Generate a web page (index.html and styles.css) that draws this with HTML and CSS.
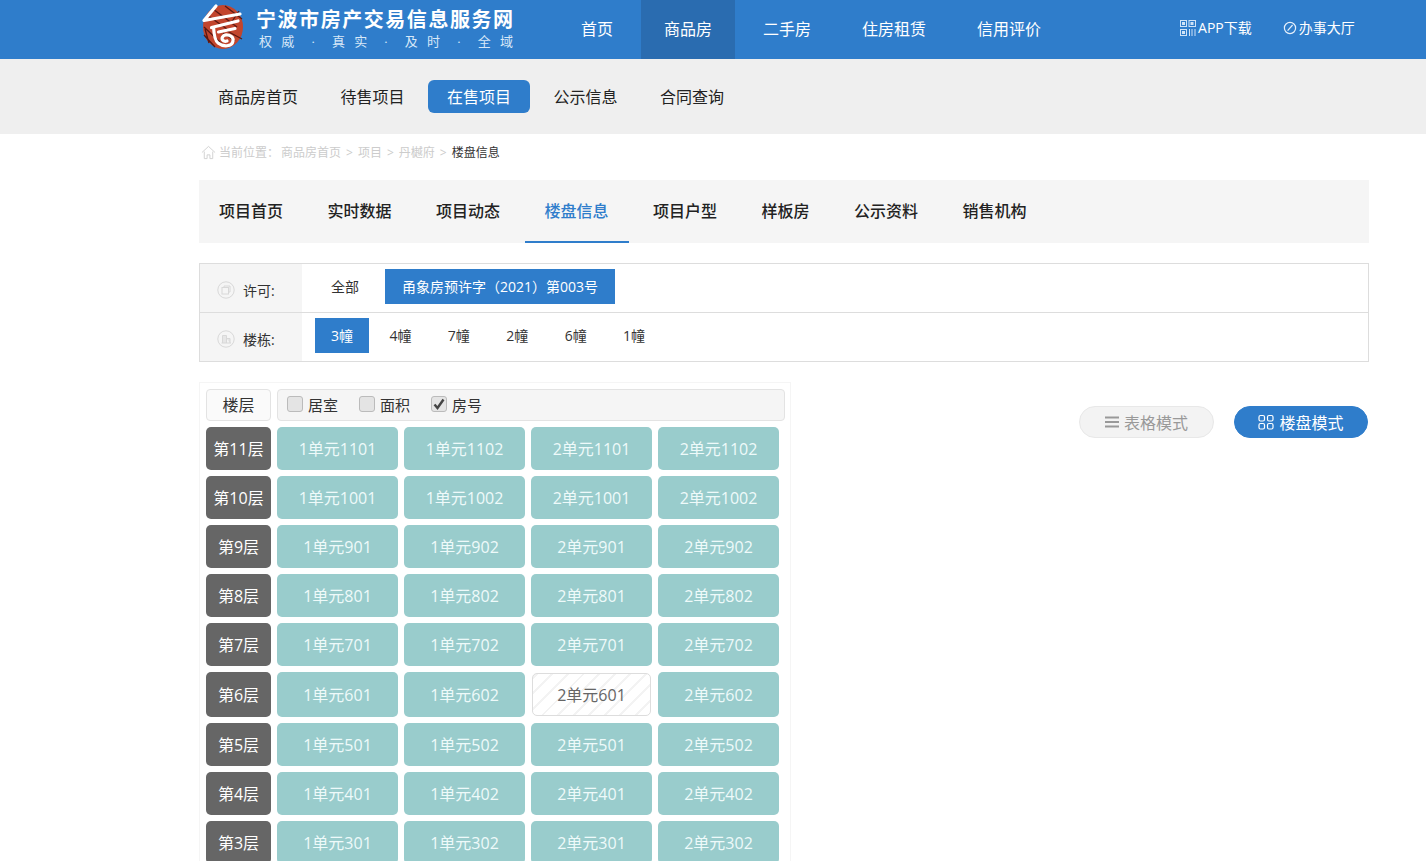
FILE: index.html
```html
<!DOCTYPE html>
<html lang="zh-CN">
<head>
<meta charset="utf-8">
<title>宁波市房产交易信息服务网</title>
<link rel="stylesheet" href="styles.css">
</head>
<body>
<header class="topbar">
  <div class="brand">
    <svg class="logo" viewBox="0 0 46 48" width="46" height="48">
      <ellipse cx="24" cy="24" rx="20" ry="22" fill="#c2452d"/>
      <path d="M8 12L28 26M14 6L38 24M26 3L43 16M5 24L24 42M5 32L16 44M28 28L43 36M36 38L24 30M10 40L6 26M40 8L32 20" fill="none" stroke="#5a1812" stroke-width="1.300"/>
      <path d="M17 3L5 17.500L41 11M12.500 24.500L39 18M19.500 29L36 25.500M14.500 24C15 32 16 38 19 40C24 44 33 44 34 38C35 32 26 30 23.500 34C22 37 25 39 28 38" fill="none" stroke="#fff" stroke-width="3.200" stroke-linejoin="round" stroke-linecap="round"/>
    </svg>
    <div class="brand-text">
      <div class="brand-title">宁波市房产交易信息服务网</div>
      <div class="brand-sub"><span>权 威</span><span>·</span><span>真 实</span><span>·</span><span>及 时</span><span>·</span><span>全 域</span></div>
    </div>
  </div>
  <nav class="mainnav">
    <a>首页</a><a class="on">商品房</a><a>二手房</a><a>住房租赁</a><a>信用评价</a>
  </nav>
  <div class="toplinks">
    <a class="app"><svg viewBox="0 0 16 18" width="16" height="18" fill="none" stroke="#cfe3f7" stroke-width="1"><rect x=".5" y="1.5" width="6" height="6"/><rect x="9" y="1.5" width="6.5" height="6"/><rect x=".5" y="10.5" width="6" height="6"/><rect x="2.5" y="3.5" width="2" height="2" fill="#cfe3f7"/><rect x="11" y="3.5" width="2" height="2" fill="#cfe3f7"/><rect x="2.5" y="12.5" width="2" height="2" fill="#cfe3f7"/><path d="M9.5 10v7M12 10v7M15 10v7"/></svg>APP下载</a>
    <a class="hall"><svg viewBox="0 0 14 14" width="14" height="14" fill="none" stroke="#e6f0fb" stroke-width="1.2"><circle cx="7" cy="7" r="5.6"/><path d="M4.6 9.6L9.6 4"/></svg>办事大厅</a>
  </div>
</header>

<div class="subbar">
  <nav class="subnav"><a>商品房首页</a><a>待售项目</a><a class="on">在售项目</a><a>公示信息</a><a>合同查询</a></nav>
</div>

<main class="page">
  <div class="crumbs">
    <svg viewBox="0 0 16 16" width="15" height="15" fill="none" stroke="#d0d0d0" stroke-width="1"><path d="M1 8L8 1.5L15 8M3.5 7v7.5h3v-4h3v4h3V7"/></svg>
    <span class="crumb-label">当前位置：</span><span>商品房首页</span><i>&gt;</i><span>项目</span><i>&gt;</i><span>丹樾府</span><i>&gt;</i><b>楼盘信息</b>
  </div>

  <nav class="tabs"><a>项目首页</a><a>实时数据</a><a>项目动态</a><a class="on">楼盘信息</a><a>项目户型</a><a>样板房</a><a>公示资料</a><a>销售机构</a></nav>

  <section class="filter">
    <div class="filter-row">
      <div class="filter-label"><svg viewBox="0 0 18 18" width="18" height="18" fill="none" stroke="#d8d8d8"><circle cx="9" cy="9" r="8.2"/><rect x="5" y="6.5" width="6.5" height="6.5"/><path d="M7 6.5V5h6v6h-1.500"/></svg><span>许可:</span></div>
      <div class="filter-items wide"><a>全部</a><a class="on pad">甬象房预许字（2021）第003号</a></div>
    </div>
    <div class="filter-row">
      <div class="filter-label"><svg viewBox="0 0 18 18" width="18" height="18" fill="none" stroke="#d8d8d8"><circle cx="9" cy="9" r="8.2"/><path d="M5.500 13V5.500h4V13M9.500 8.500h3.500V13M4.500 13h9.500" fill="#e6e6e6"/></svg><span>楼栋:</span></div>
      <div class="filter-items"><a class="on">3幢</a><a>4幢</a><a>7幢</a><a>2幢</a><a>6幢</a><a>1幢</a></div>
    </div>
  </section>

  <div class="board">
    <section class="plan">
      <div class="plan-head">
        <div class="head-floor">楼层</div>
        <div class="head-opts">
          <label class="opt"><span class="box"></span>居室</label>
          <label class="opt"><span class="box"></span>面积</label>
          <label class="opt"><span class="box"><svg viewBox="0 0 16 16" width="16" height="16"><path d="M3.500 8.500L6.500 12L12.500 3.500" fill="none" stroke="#444" stroke-width="2.400"/></svg></span>房号</label>
        </div>
      </div>
      <div class="grid">
        <div class="floor">第11层</div><div class="room">1单元1101</div><div class="room">1单元1102</div><div class="room">2单元1101</div><div class="room">2单元1102</div>
        <div class="floor">第10层</div><div class="room">1单元1001</div><div class="room">1单元1002</div><div class="room">2单元1001</div><div class="room">2单元1002</div>
        <div class="floor">第9层</div><div class="room">1单元901</div><div class="room">1单元902</div><div class="room">2单元901</div><div class="room">2单元902</div>
        <div class="floor">第8层</div><div class="room">1单元801</div><div class="room">1单元802</div><div class="room">2单元801</div><div class="room">2单元802</div>
        <div class="floor">第7层</div><div class="room">1单元701</div><div class="room">1单元702</div><div class="room">2单元701</div><div class="room">2单元702</div>
        <div class="floor">第6层</div><div class="room">1单元601</div><div class="room">1单元602</div><div class="room sold">2单元601</div><div class="room">2单元602</div>
        <div class="floor">第5层</div><div class="room">1单元501</div><div class="room">1单元502</div><div class="room">2单元501</div><div class="room">2单元502</div>
        <div class="floor">第4层</div><div class="room">1单元401</div><div class="room">1单元402</div><div class="room">2单元401</div><div class="room">2单元402</div>
        <div class="floor">第3层</div><div class="room">1单元301</div><div class="room">1单元302</div><div class="room">2单元301</div><div class="room">2单元302</div>
      </div>
    </section>
    <div class="modes">
      <a class="mode"><svg viewBox="0 0 14 14" width="14" height="14" stroke="#999" stroke-width="2"><path d="M0 2.500h14M0 7h14M0 11.500h14"/></svg>表格模式</a>
      <a class="mode on"><svg viewBox="0 0 16 16" width="16" height="16" fill="none" stroke="#fff" stroke-width="1.200"><rect x="1" y="1.500" width="5.500" height="5.500" rx="1.500"/><rect x="9.500" y="1.500" width="5.500" height="5.500" rx="1.500"/><rect x="1" y="9.500" width="5.500" height="5.500" rx="1.500"/><rect x="9.500" y="9.500" width="5.500" height="5.500" rx="1.500"/></svg>楼盘模式</a>
    </div>
  </div>
</main>
</body>
</html>
```

FILE: styles.css
```css
* { box-sizing: border-box; }
html, body { margin: 0; height: 861px; overflow: hidden; background: #fff; }
body { font-family: "Open Sans", "Noto Sans CJK SC", sans-serif; color: #333; font-size: 14px; }
a { color: inherit; text-decoration: none; }

.topbar { height: 59px; background: #2f7dcb; color: #fff; display: flex; padding-left: 199px; }
.brand { width: 359px; display: flex; align-items: flex-start; }
.logo { flex: none; margin-top: 3px; }
.brand-text { margin-left: 11px; width: 258px; font-family: "Liberation Serif", "Noto Sans CJK SC", serif; }
.brand-title { font-size: 20px; font-weight: 700; letter-spacing: 1.55px; line-height: 24px; margin-top: 8px; white-space: nowrap; }
.brand-sub { display: flex; justify-content: space-between; font-size: 13px; line-height: 16px; word-spacing: 6px; margin-top: 2px; padding: 0 1px 0 3px; color: #d8e8f8; white-space: pre; }
.mainnav { display: flex; gap: 5px; font-size: 16px; }
.mainnav a { padding: 0 23px; line-height: 58px; }
.mainnav a.on { background: #2a6cb0; }
.toplinks { display: flex; margin-left: 116px; font-size: 14px; line-height: 55px; height: 55px; }
.toplinks a { display: flex; align-items: center; gap: 2px; }
.hall { margin-left: 31px; }

.subbar { height: 75px; background: #efefef; padding: 21px 0 0 199px; }
.subnav { display: flex; gap: 4.500px; font-size: 16px; color: #222; }
.subnav a { padding: 0 19px; height: 33px; line-height: 35px; border-radius: 6px; }
.subnav a.on { background: #2f7dcb; color: #fff; }

.page { margin-left: 199px; width: 1170px; }
.crumbs { height: 46px; display: flex; align-items: center; gap: 5px; padding: 0 0 10px 2px; font-size: 12px; color: #ccc; }
.crumb-label { margin-left: -2px; margin-right: -3px; }
.crumbs i { font-style: normal; }
.crumbs b { font-weight: 400; color: #333; }

.tabs { height: 63px; background: #f5f5f5; display: flex; gap: 4.500px; font-size: 16px; font-weight: 500; color: #222; }
.tabs a { padding: 0 20px; line-height: 63px; }
.tabs a.on { color: #2f7dcb; border-bottom: 2px solid #2f7dcb; }

.filter { margin-top: 20px; border: 1px solid #ddd; }
.filter-row { display: flex; height: 48px; }
.filter-row + .filter-row { border-top: 1px solid #ddd; height: 49px; }
.filter-label { width: 102px; background: #f5f5f5; display: flex; align-items: center; padding: 4px 0 0 17px; gap: 8px; }
.filter-items { display: flex; gap: 4.400px; padding: 5px 0 0 13px; }
.filter-items a { height: 35px; line-height: 35px; padding: 0 16px; }
.filter-items a.on { background: #2f7dcb; color: #fff; }
.filter-items.wide { gap: 10px; }
.filter-items a.pad { padding: 0 17px; }

.board { display: flex; justify-content: space-between; align-items: flex-start; margin-top: 20px; }
.plan { width: 592px; border: 1px solid #f5f5f5; padding: 6px 0 0 6px; }
.plan-head { display: flex; gap: 6px; height: 32px; font-size: 15px; }
.head-floor, .head-opts { background: #f5f5f5; border: 1px solid #e3e3e3; border-radius: 4px; }
.head-floor { width: 65px; text-align: center; line-height: 31px; background: #fafafa; font-size: 16px; }
.head-opts { width: 508px; display: flex; align-items: center; padding: 0 0 2px 9px; gap: 21px; }
.opt { display: flex; align-items: center; gap: 5px; }
.box { width: 16px; height: 16px; background: #e4e4e4; border: 1px solid #bbb; border-radius: 3px; margin-top: -1px; display: block; }
.box svg { display: block; margin: -1px; }

.grid { display: grid; grid-template-columns: 65px repeat(4, 121px); gap: 6px; margin-top: 6px; font-size: 16px; }
.floor, .room { min-height: 43px; border-radius: 5px; display: flex; align-items: center; justify-content: center; padding-bottom: 2px; color: #fff; }
.floor { background: #666; }
.room { background: #99cccc; color: #eefafa; }
.room.sold { margin: 1px; color: #666; border: 1px solid #ddd; background: repeating-linear-gradient(-45deg, #fff 0, #fff 9px, #f3f3f3 9px, #f3f3f3 11px); }

.modes { display: flex; gap: 20px; padding-top: 24px; padding-right: 1px; font-size: 16px; }
.mode { width: 135px; height: 32px; border-radius: 16px; border: 1px solid #e8e8e8; background: #f3f3f3; color: #999; display: flex; align-items: center; justify-content: center; gap: 5px; }
.mode.on { width: 134px; background: #2f7dcb; border-color: #2f7dcb; color: #fff; }
```
